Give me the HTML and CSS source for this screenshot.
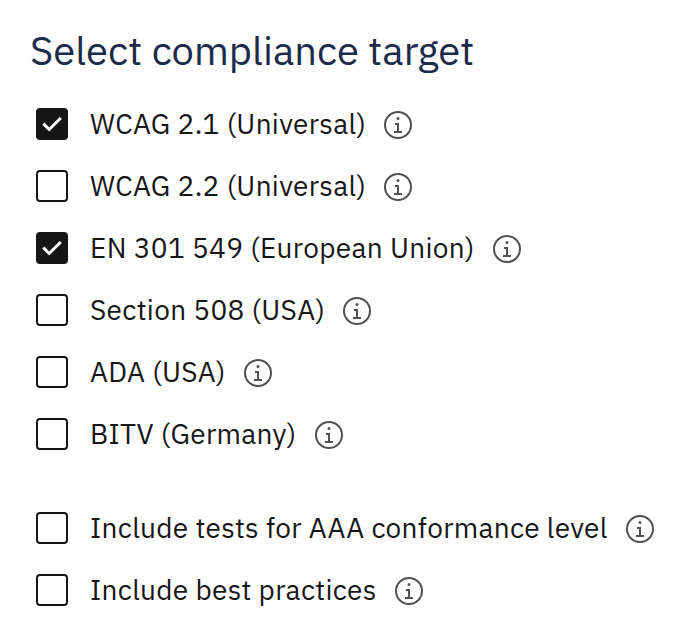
FILE: index.html
```html
<!DOCTYPE html>
<html lang="en">
<head>
<meta charset="utf-8">
<title>Select compliance target</title>
<link rel="stylesheet" href="styles.css">
</head>
<body>
<svg class="defs" aria-hidden="true">
  <symbol id="info" viewBox="0 0 32 32">
    <path d="M17 22V14h-4v2h2v6h-3v2h8v-2zM16 8a1.5 1.5 0 1 0 1.5 1.5A1.5 1.5 0 0 0 16 8z"/>
    <path d="M16 30a14 14 0 1 1 14-14 14 14 0 0 1-14 14zm0-26a12 12 0 1 0 12 12A12 12 0 0 0 16 4z"/>
  </symbol>
</svg>
<main class="panel">
  <h1 class="title">Select compliance target</h1>
  <div class="group">
    <div class="row"><span class="box checked"><svg class="tick" viewBox="0 0 32 32"><path d="M7.3 15.6l5.9 5.9L24.8 10"/></svg></span><span class="label">WCAG 2.1 (Universal)</span><svg class="info"><use href="#info"/></svg></div>
    <div class="row"><span class="box"></span><span class="label">WCAG 2.2 (Universal)</span><svg class="info"><use href="#info"/></svg></div>
    <div class="row"><span class="box checked"><svg class="tick" viewBox="0 0 32 32"><path d="M7.3 15.6l5.9 5.9L24.8 10"/></svg></span><span class="label">EN 301 549 (European Union)</span><svg class="info"><use href="#info"/></svg></div>
    <div class="row"><span class="box"></span><span class="label">Section 508 (USA)</span><svg class="info"><use href="#info"/></svg></div>
    <div class="row"><span class="box"></span><span class="label">ADA (USA)</span><svg class="info"><use href="#info"/></svg></div>
    <div class="row"><span class="box"></span><span class="label">BITV (Germany)</span><svg class="info"><use href="#info"/></svg></div>
  </div>
  <div class="group">
    <div class="row"><span class="box"></span><span class="label">Include tests for AAA conformance level</span><svg class="info"><use href="#info"/></svg></div>
    <div class="row"><span class="box"></span><span class="label">Include best practices</span><svg class="info"><use href="#info"/></svg></div>
  </div>
</main>
</body>
</html>
```
FILE: styles.css
```css
* { box-sizing: border-box; }
body { margin: 0; background: #fff; color: #161616; font-family: "IBM Plex Sans", Roboto, sans-serif; }
.defs { display: block; width: 0; height: 0; }
.panel { padding: 26px 0 0 30px; }
.title { margin: 0 0 34px; font-size: 40px; line-height: 48px; font-weight: 400; color: #1c2b4a; white-space: nowrap; }
.group { display: flex; flex-direction: column; gap: 30px; padding-left: 6px; }
.group + .group { margin-top: 62px; }
.row { display: flex; align-items: center; height: 32px; }
.box { flex: none; width: 32px; height: 32px; border: 2px solid #161616; border-radius: 4px; }
.checked { background: #161616; }
.tick { display: block; width: 32px; height: 32px; margin: -2px; fill: none; stroke: #fff; stroke-width: 3; }
.label { flex: none; margin: 0 16px 0 22px; font-size: 28px; line-height: 32px; white-space: nowrap; letter-spacing: 0.32px; }
.info { flex: none; display: block; width: 32px; height: 32px; margin-top: 2px; fill: #525252; }
```
